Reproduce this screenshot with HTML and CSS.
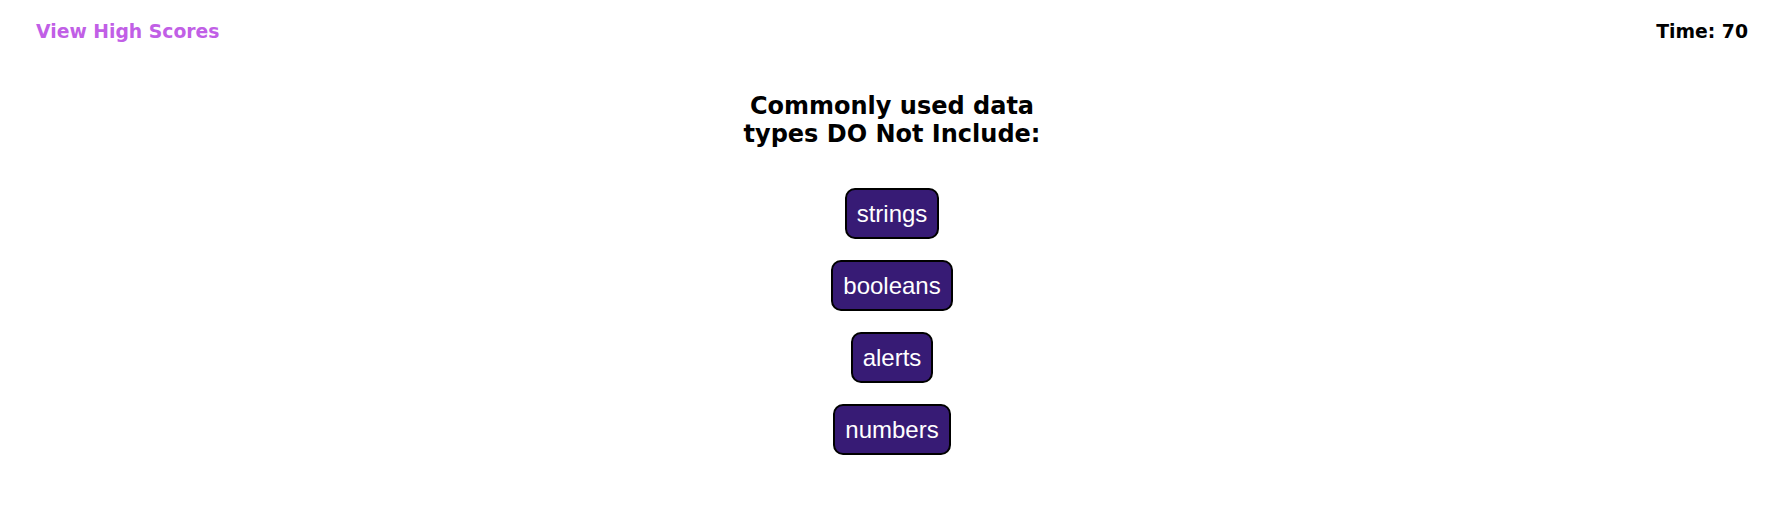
FILE: index.html
```html
<!DOCTYPE html>
<html lang="en">
<head>
    <meta charset="UTF-8">
    <meta name="viewport" content="width=device-width, initial-scale=1.0">
    <title>Code Quiz</title>
    <link rel="stylesheet" href="styles.css">
</head>
<body>
    <header class="top-bar">
        <a href="#" class="high-scores">View High Scores</a>
        <p class="timer">Time: <span id="time">70</span></p>
    </header>
    <main class="quiz">
        <h2 id="question" class="question">Commonly used data types DO Not Include:</h2>
        <div class="answers">
            <button class="answer">strings</button>
            <button class="answer">booleans</button>
            <button class="answer">alerts</button>
            <button class="answer">numbers</button>
        </div>
    </main>
</body>
</html>
```
FILE: styles.css
```css
body {
    margin: 8px;
    font-family: Verdana, "DejaVu Sans", sans-serif;
    background: #ffffff;
    color: #000000;
}

.top-bar {
    display: flex;
    justify-content: space-between;
    align-items: center;
    padding: 13px 23px 0 28px;
    font-size: 18.8px;
    font-weight: bold;
}

.high-scores {
    color: #c15fe6;
    text-decoration: none;
}

.timer {
    margin: 0;
}

.quiz {
    width: 320px;
    margin: 50px auto 0 auto;
    padding-left: 5px;
    text-align: center;
}

.question {
    font-size: 24px;
    margin: 0 0 40px 0;
}

.answers {
    display: flex;
    flex-direction: column;
    align-items: center;
    gap: 21px;
}

.answer {
    font-family: "Liberation Sans", Arial, sans-serif;
    font-size: 24px;
    line-height: 27px;
    color: #ffffff;
    background-color: #371b75;
    border: 2px solid #000000;
    border-radius: 10px;
    padding: 10px;
    cursor: pointer;
}
```
